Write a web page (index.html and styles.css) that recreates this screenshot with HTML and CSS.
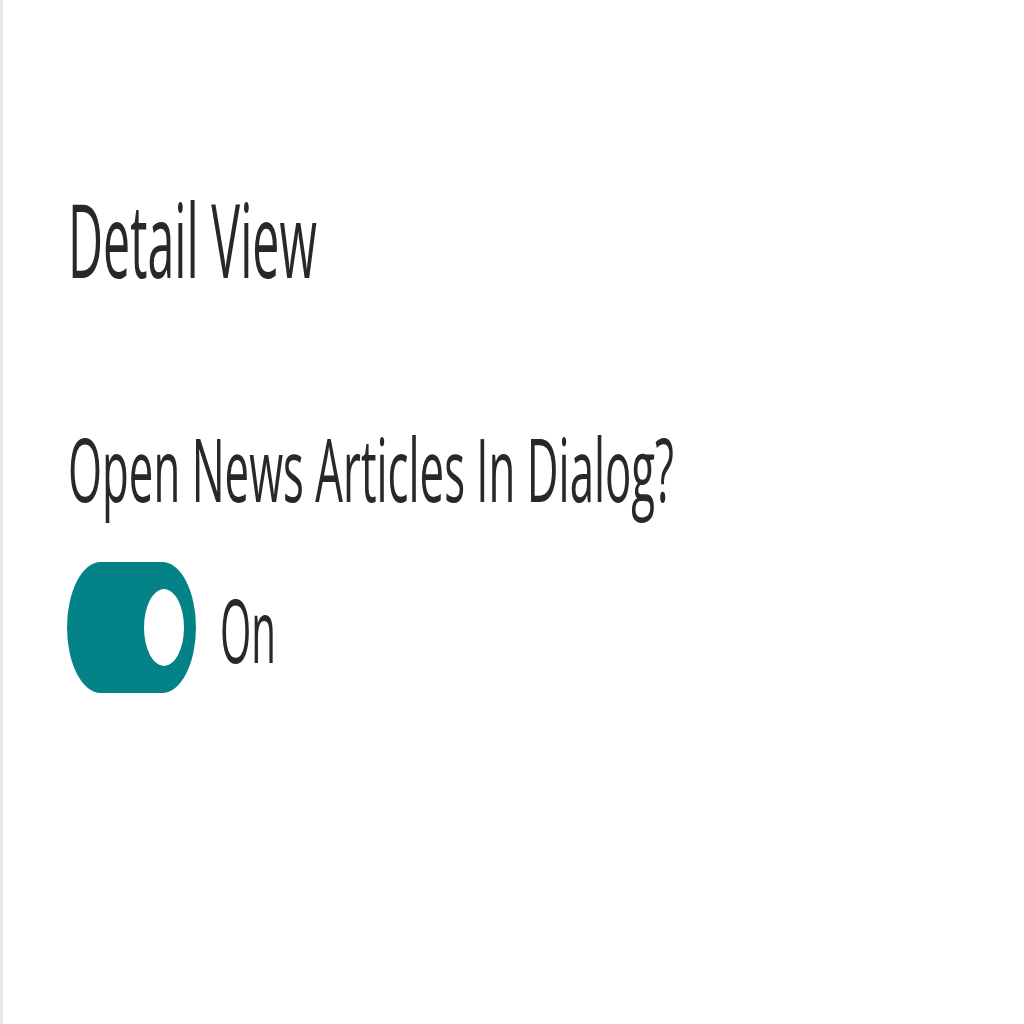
FILE: index.html
```html
<!DOCTYPE html>
<html>
<head>
<meta charset="utf-8">
<link rel="stylesheet" href="styles.css">
</head>
<body>
<div class="frame">
  <div class="panel">
    <svg class="title" width="280" height="100" viewBox="0 0 280 100">
      <text class="txt title-txt" x="1" y="88" textLength="249" lengthAdjust="spacingAndGlyphs">Detail View</text>
    </svg>
    <svg class="label" width="660" height="100" viewBox="0 0 660 100">
      <text class="txt label-txt" x="1" y="77" textLength="606" lengthAdjust="spacingAndGlyphs">Open News Articles In Dialog?</text>
    </svg>
    <div class="toggle-row">
      <span class="toggle"><span class="knob"></span></span>
      <svg class="state" width="90" height="131" viewBox="0 0 90 131">
        <text class="txt state-txt" x="1" y="101" textLength="56" lengthAdjust="spacingAndGlyphs">On</text>
      </svg>
    </div>
  </div>
</div>
</body>
</html>
```
FILE: styles.css
```css
html, body {
  margin: 0;
  padding: 0;
  background: #ffffff;
}
.frame {
  width: 1024px;
  height: 1024px;
  box-sizing: border-box;
  border-left: 3px solid #e6e6e6;
  background: #ffffff;
  overflow: hidden;
}
.panel {
  padding: 190px 0 0 64px;
  display: flex;
  flex-direction: column;
  align-items: flex-start;
}
.txt {
  font-family: "Open Sans", "Noto Sans", sans-serif;
  fill: #292827;
}
.title, .label, .state {
  display: block;
  overflow: visible;
}
.title-txt {
  font-size: 102px;
}
.label {
  margin-top: 135px;
}
.label-txt {
  font-size: 87px;
}
.toggle-row {
  margin-top: 37px;
  display: flex;
  align-items: flex-start;
  gap: 23px;
}
.toggle {
  width: 129px;
  height: 131px;
  border-radius: 34px / 66px;
  background: #038387;
  display: flex;
  align-items: center;
  justify-content: flex-end;
  padding-right: 12px;
  box-sizing: border-box;
}
.knob {
  width: 40px;
  height: 77px;
  border-radius: 50%;
  background: #ffffff;
}
.state-txt {
  font-size: 88px;
}
```
